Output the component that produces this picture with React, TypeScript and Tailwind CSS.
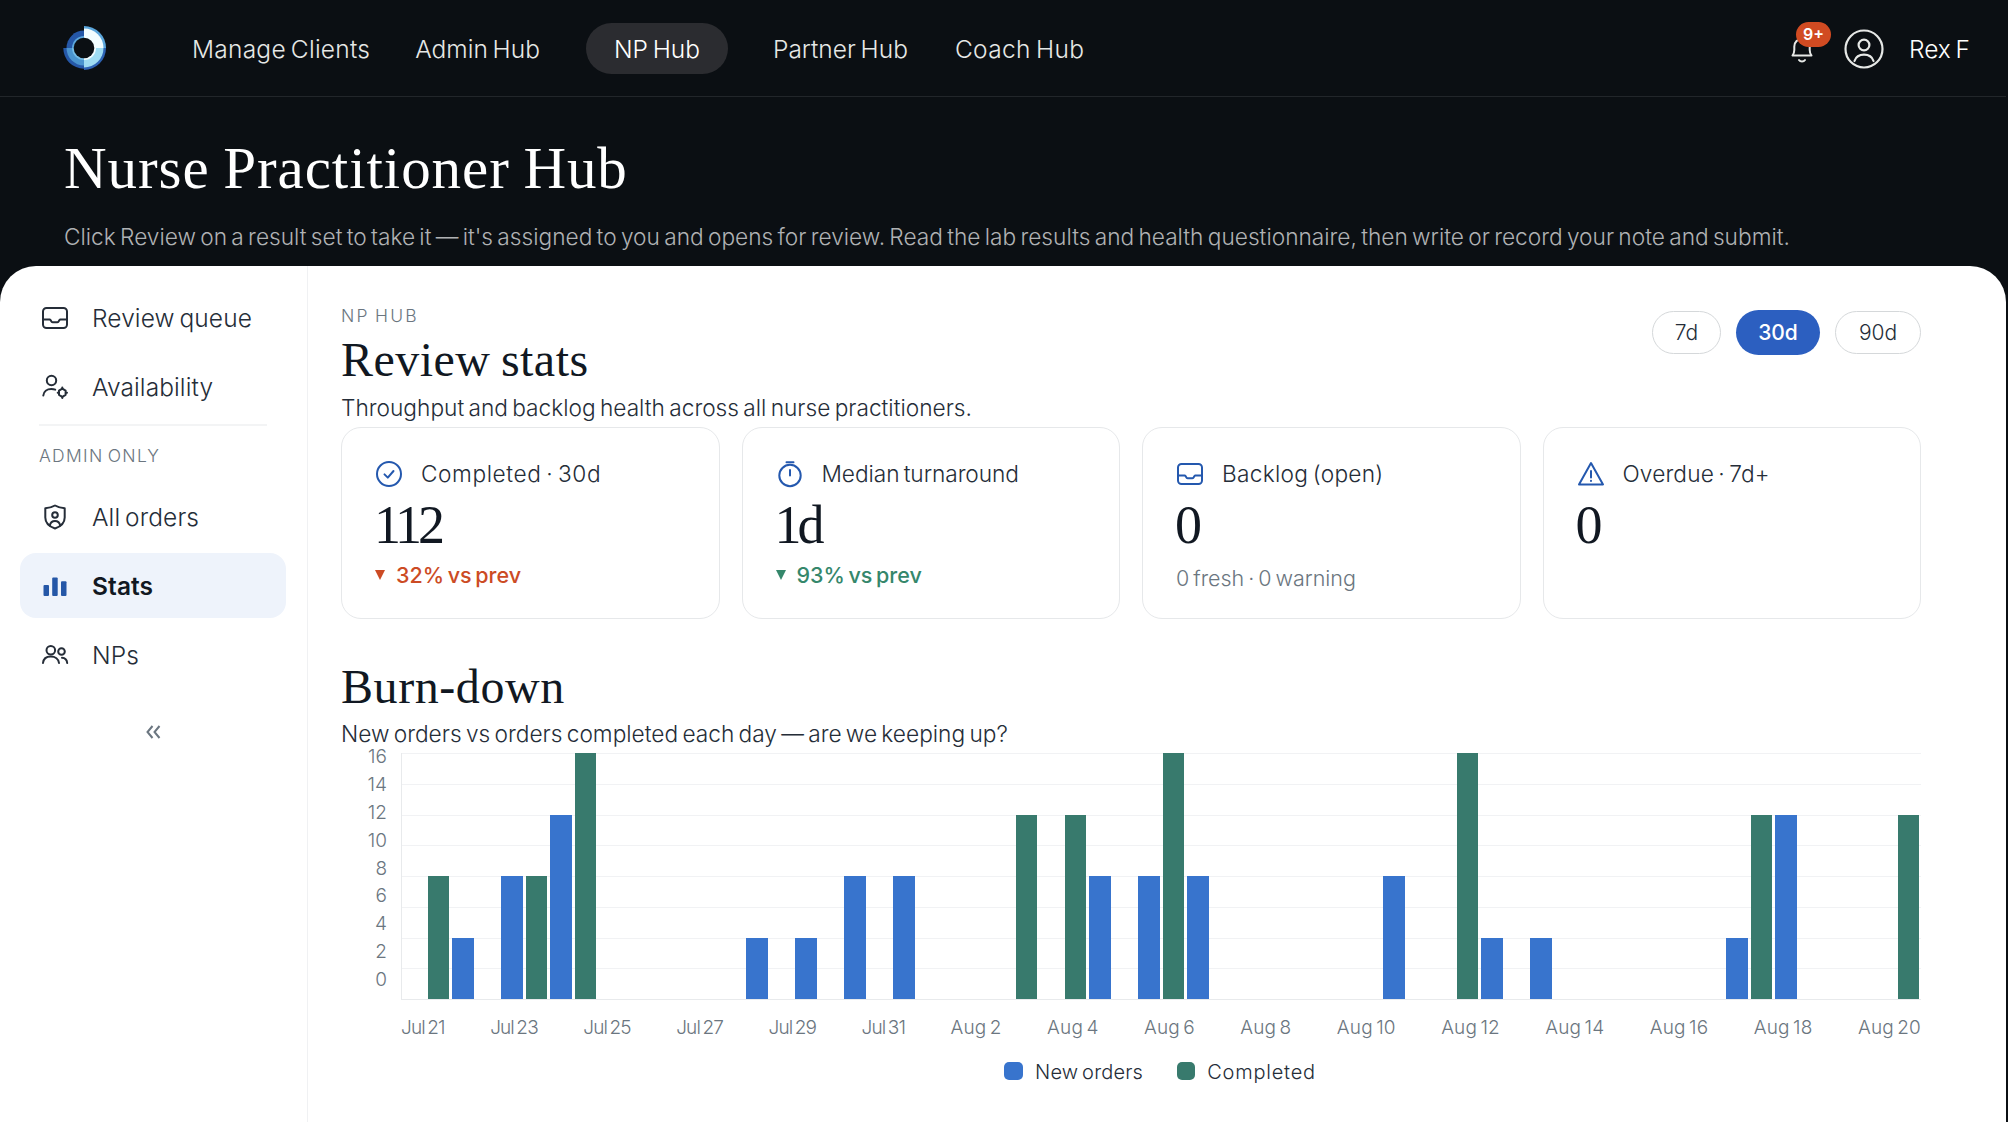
import React from "react";

interface IconProps {
  className?: string;
}

const navLinks = [
  { label: "Manage Clients", className: "ml-[86px] tracking-[0.01em]" },
  { label: "Admin Hub", className: "ml-[45px]" },
  { label: "NP Hub", active: true, className: "ml-[46px]" },
  { label: "Partner Hub", className: "ml-[45px]" },
  { label: "Coach Hub", className: "ml-[47px] tracking-[0.014em]" }
];

const yTicks = [16, 14, 12, 10, 8, 6, 4, 2, 0];

const xTicks = [
  "Jul 21", "Jul 23", "Jul 25", "Jul 27", "Jul 29", "Jul 31", "Aug 2", "Aug 4",
  "Aug 6", "Aug 8", "Aug 10", "Aug 12", "Aug 14", "Aug 16", "Aug 18", "Aug 20"
];

// [new orders, completed] for each day, Jul 21 to Aug 20
const days: [number, number][] = [
  [0, 8], [4, 0], [8, 8], [12, 16], [0, 0], [0, 0], [0, 0], [4, 0],
  [4, 0], [8, 0], [8, 0], [0, 0], [0, 12], [0, 12], [8, 0], [8, 16],
  [8, 0], [0, 0], [0, 0], [0, 0], [8, 0], [0, 16], [4, 0], [4, 0],
  [0, 0], [0, 0], [0, 0], [4, 12], [12, 0], [0, 0], [0, 12]
];

const MAX = 16;

function Svg({ className, children }: IconProps & { children: React.ReactNode }) {
  return (
    <svg viewBox="0 0 28 28" fill="none" stroke="currentColor" strokeWidth="2" strokeLinecap="round" strokeLinejoin="round" className={className}>
      {children}
    </svg>
  );
}

function InboxIcon({ className }: IconProps) {
  return (
    <Svg className={className}>
      <rect x="2" y="4" width="24" height="20" rx="3.5" />
      <path d="M2.5 15.5h6.5c.8 0 1 2.800 2.600 2.800h4.800c1.600 0 1.800-2.800 2.600-2.800h6.500" />
    </Svg>
  );
}

function UserCogIcon({ className }: IconProps) {
  return (
    <Svg className={className}>
      <circle cx="10.500" cy="7.500" r="4.700" />
      <path d="M2.300 22.500c.3-4 3.700-6.500 8-6.500 1.500 0 2.800.2 3.900.7" />
      <path d="M21.300 15.600l3.300 2v4.200l-3.300 2-3.300-2v-4.200z" />
      <path d="M21.300 14.400v1M21.300 24v1M16.700 19.700h.8M25.200 19.700h.8" />
    </Svg>
  );
}

function ShieldUserIcon({ className }: IconProps) {
  return (
    <Svg className={className}>
      <path d="M14 2.500c3 1.800 6.200 2.600 9.700 2.700v9.300c0 5.300-3.900 9-9.700 11-5.800-2-9.700-5.700-9.700-11V5.200C7.800 5.100 11 4.300 14 2.500z" />
      <circle cx="14" cy="12" r="2.800" />
      <path d="M8.800 22.500c.6-2.900 2.500-4.500 5.200-4.500s4.600 1.600 5.200 4.500" />
    </Svg>
  );
}

function BarsIcon({ className }: IconProps) {
  return (
    <svg viewBox="0 0 28 28" fill="currentColor" className={className}>
      <rect x="2.500" y="13" width="5.500" height="11" rx="1" />
      <rect x="11.200" y="5.500" width="5.500" height="18.500" rx="1" />
      <rect x="20" y="9.300" width="5.500" height="14.700" rx="1" />
    </svg>
  );
}

function UsersIcon({ className }: IconProps) {
  return (
    <Svg className={className}>
      <circle cx="9.800" cy="9.300" r="4.300" />
      <path d="M2 22c.4-4 3.500-6.500 7.800-6.500s7.800 2.500 8.200 6.500" />
      <circle cx="20.500" cy="10.500" r="3.300" />
      <path d="M21 16.800c2.900.1 4.900 2 5.200 5.200" />
    </Svg>
  );
}

function CheckCircleIcon({ className }: IconProps) {
  return (
    <Svg className={className}>
      <circle cx="14" cy="14" r="12" />
      <path d="M9.500 14.400l3.300 3.200 5.700-6.600" />
    </Svg>
  );
}

function StopwatchIcon({ className }: IconProps) {
  return (
    <Svg className={className}>
      <circle cx="14" cy="15.500" r="10.700" />
      <path d="M10.500 2.300h7M14 10v5.500" />
    </Svg>
  );
}

function WarningIcon({ className }: IconProps) {
  return (
    <Svg className={className}>
      <path d="M14 3L26 24.500H2z" />
      <path d="M14 11v6.500M14 20.700v.2" />
    </Svg>
  );
}

function Logo() {
  return (
    <svg viewBox="-22 -22 44 44" className="-mt-0.5 h-11 w-11">
      <path d="M0-17.500A17.500 17.500 0 0 0-17.500 0H0z" fill="#2557a7" />
      <path d="M0-12A12 12 0 0 0-12 0H0z" fill="#5ba6dc" />
      <path d="M0-22A22 22 0 0 1 22 0H0z" fill="#5ba6dc" />
      <path d="M0-19.500A19.500 19.500 0 0 1 19.500 0H0z" fill="#f2fdff" />
      <path d="M22 0A22 22 0 0 1 0 22V0z" fill="#2d62b4" />
      <path d="M19.500 0A19.500 19.500 0 0 1 0 19.500V0z" fill="#9edcf2" />
      <path d="M12 0A12 12 0 0 1 0 12V0z" fill="#f2fdff" />
      <path d="M-20.700 0A20.700 20.700 0 0 0 0 20.700V0z" fill="#2557a7" />
      <path d="M-17.500 0A17.500 17.500 0 0 0 0 17.500V0z" fill="#4a94cf" />
      <path d="M-12 0A12 12 0 0 0 0 12V0z" fill="#74bce6" />
      <circle r="10.300" fill="#0b0f13" />
    </svg>
  );
}

function TopBar() {
  return (
    <header className="flex h-[97px] items-center border-b border-[#22262a] pl-[62px] pt-px text-[24.500px] font-[330] text-[#e6e8e6]">
      <Logo />
      <nav className="flex items-center">
        {navLinks.map((link) => (
          <a
            key={link.label}
            className={`${link.className} whitespace-nowrap ${link.active ? "rounded-full bg-[#2b2c30] px-7 pb-[6px] pt-[8px] text-white" : "pt-0.5"}`}
          >
            {link.label}
          </a>
        ))}
      </nav>
      <div className="ml-auto flex items-center pr-[36px]">
        <div className="relative h-7 w-7">
          <Svg className="h-7 w-7">
            <path d="M4.500 20.500h19c-1.300-1.700-1.800-3-1.800-5.500v-3.500a7.700 7.700 0 0 0-15.400 0V15c0 2.500-.5 3.800-1.800 5.500z" />
            <path d="M11 25c.7 1 1.700 1.500 3 1.500s2.300-.5 3-1.500" />
          </Svg>
          <span className="absolute -top-[13px] left-2 flex h-[25px] w-[35px] items-center justify-center rounded-full bg-[#d14b22] text-[16px] font-semibold text-white">9+</span>
        </div>
        <svg viewBox="0 0 40 40" fill="none" stroke="currentColor" strokeWidth="2.200" strokeLinecap="round" className="ml-[28px] h-10 w-10">
          <circle cx="20" cy="20" r="18.500" />
          <circle cx="20" cy="16" r="5.400" />
          <path d="M10.500 32c1.300-4 4.900-6.300 9.500-6.300s8.200 2.300 9.500 6.300" />
        </svg>
        <span className="ml-[25px] pt-0.5 text-white">Rex F</span>
      </div>
    </header>
  );
}

interface SideItemProps {
  icon: React.ReactNode;
  label: string;
  active?: boolean;
}

function SideItem({ icon, label, active }: SideItemProps) {
  return (
    <a
      className={`flex h-[65px] items-center gap-[23px] rounded-2xl pl-[21px] text-[24.500px] ${
        active ? "bg-[#eef3fb] font-semibold text-[#111822]" : "font-[330] text-[#252d38]"
      }`}
    >
      {icon}
      <span className="pt-0.5 tracking-[0.004em]">{label}</span>
    </a>
  );
}

function Sidebar() {
  return (
    <aside className="w-[308px] shrink-0 border-r border-[#f0f1f3] pl-5 pr-[21px] pt-[19px]">
      <div className="flex flex-col gap-1">
        <SideItem icon={<InboxIcon className="h-7 w-7" />} label="Review queue" />
        <SideItem icon={<UserCogIcon className="h-7 w-7" />} label="Availability" />
      </div>
      <div className="mx-[19px] mt-[5px] h-0.5 bg-[#f3f4f5]" />
      <div className="ml-[19px] mt-[16px] h-[27px] text-[17.500px] leading-[27px] font-[330] tracking-[0.075em] text-[#6b7680]">ADMIN ONLY</div>
      <div className="mt-[15px] flex flex-col gap-1">
        <SideItem icon={<ShieldUserIcon className="h-7 w-7" />} label="All orders" />
        <SideItem icon={<BarsIcon className="h-7 w-7 text-[#2557a7]" />} label="Stats" active />
        <SideItem icon={<UsersIcon className="h-7 w-7" />} label="NPs" />
      </div>
      <div className="mt-[38px] flex justify-center">
        <svg viewBox="0 0 16 14" fill="none" stroke="#6b7680" strokeWidth="2" className="h-3.5 w-4">
          <path d="M7.500 1L2.500 7l5 6M14.500 1l-5 6 5 6" />
        </svg>
      </div>
    </aside>
  );
}

interface StatCardProps {
  icon: React.ReactNode;
  title: string;
  titleClass?: string;
  value: string;
  delta?: string;
  deltaClass?: string;
  note?: string;
}

function StatCard({ icon, title, titleClass, value, delta, deltaClass, note }: StatCardProps) {
  return (
    <div className="h-[192px] flex-1 rounded-[20px] border border-[#e6e8ea] pl-[33px] pt-[31px]">
      <div className="flex h-[29px] items-center gap-[18px] text-[22.700px] font-[330] text-[#252d38]">
        <span className="text-[#2458ae]">{icon}</span>
        <span className={`pt-px ${titleClass ?? ""}`}>{title}</span>
      </div>
      <div className="-ml-px mt-[10px] h-[54px] font-['Liberation_Serif',serif] text-[54px] leading-[54px] tracking-[-0.075em] text-[#111822]">{value}</div>
      {delta && (
        <div className={`mt-[9px] flex h-[28px] items-center gap-[11px] text-[21.500px] font-medium ${deltaClass}`}>
          <svg viewBox="0 0 10 10" fill="currentColor" className="h-2.5 w-2.5">
            <path d="M0 0h10L5 10z" />
          </svg>
          {delta}
        </div>
      )}
      {note && <div className="mt-[12px] h-[28px] text-[21.500px] leading-[28px] font-[330] text-[#6b7680]">{note}</div>}
    </div>
  );
}

function BurnDownChart() {
  return (
    <div>
      <div className="flex">
        <div className="flex h-[247px] w-[46px] flex-col justify-between pb-[17px] pt-px text-right text-[19px] leading-[6px] font-[330] text-[#6b7680]">
          {yTicks.map((t) => (
            <span key={t}>{t}</span>
          ))}
        </div>
        <div className="ml-[14px] grid flex-1 grid-cols-1 grid-rows-1 border-b border-l border-[#e8eaec]">
          <div className="col-start-1 row-start-1 flex h-[246px] flex-col">
            {yTicks.slice(1).map((t) => (
              <div key={t} className="flex-1 border-t border-[#f1f2f4]" />
            ))}
          </div>
          <div className="col-start-1 row-start-1 flex h-[246px]">
            {days.map(([created, done], i) => (
              <div key={i} className="flex flex-1 items-end gap-[3px] pl-px pr-[2px]">
                <div className="flex-[22] bg-[#3874cd]" style={{ height: `${(created / MAX) * 100}%` }} />
                <div className="flex-[21] bg-[#387a6d]" style={{ height: `${(done / MAX) * 100}%` }} />
              </div>
            ))}
          </div>
        </div>
      </div>
      <div className="ml-[60px] mt-[15px] flex h-[27px] items-center justify-between text-[19px] font-[330] text-[#6b7680]">
        {xTicks.map((t) => (
          <span key={t} className={t.startsWith("Jul") ? "tracking-[-0.045em]" : "tracking-[0.008em]"}>{t}</span>
        ))}
      </div>
      <div className="mt-[16px] ml-[60px] flex h-[26px] items-center justify-center pr-0.5 text-[20px] font-[330] text-[#252d38]">
        <span className="h-[18px] w-[19px] rounded-[5px] bg-[#3874cd]" />
        <span className="ml-[12px] pt-0.5 tracking-[0.01em]">New orders</span>
        <span className="ml-[34px] h-[18px] w-[18px] rounded-[5px] bg-[#387a6d]" />
        <span className="ml-[12px] pt-0.5 tracking-[0.04em]">Completed</span>
      </div>
    </div>
  );
}

export default function App() {
  return (
    <div className="h-[1122px] w-[2008px] overflow-hidden bg-[#0b0f13] pr-0.5 font-['Inter',sans-serif] [word-spacing:-2.1px]">
      <TopBar />
      <div className="h-[169px] pl-16 pt-[35px]">
        <h1 className="h-[72px] whitespace-nowrap font-['Liberation_Serif',serif] text-[59px] leading-[72px] tracking-[0.016em] text-white">Nurse Practitioner Hub</h1>
        <p className="mt-[19px] h-7 whitespace-nowrap text-[22.700px] leading-7 font-[310] text-[#b0b2b4]">
          Click Review on a result set to take it — it's assigned to you and opens for review. Read the lab results and health questionnaire, then write or record your note and submit.
        </p>
      </div>

      <div className="flex h-[856px] rounded-t-[36px] bg-white">
        <Sidebar />
        <main className="flex-1 pl-[33px] pr-[85px] pt-[35px]">
          <div className="flex justify-between">
            <div>
              <div className="h-[30px] text-[17.500px] leading-[30px] font-[330] tracking-[0.13em] text-[#6b7680]">NP HUB</div>
              <h2 className="h-[58px] font-['Liberation_Serif',serif] text-[48px] leading-[58px] tracking-[0.01em] text-[#111822]">Review stats</h2>
              <p className="mt-[5px] h-[33px] text-[22.700px] leading-[28px] font-[330] text-[#252d38]">Throughput and backlog health across all nurse practitioners.</p>
            </div>
            <div className="mt-[9px] flex h-[45px] items-center gap-[15px] text-[21px] text-[#252d38]">
              <button className="h-[43px] w-[69px] rounded-full border border-[#d5d8da] font-[350]">7d</button>
              <button className="h-[45px] w-[84px] rounded-full bg-[#2c5fc0] font-medium text-white">30d</button>
              <button className="h-[43px] w-[86px] rounded-full border border-[#d5d8da] font-[350]">90d</button>
            </div>
          </div>
          <div className="flex gap-[22px]">
            <StatCard icon={<CheckCircleIcon className="h-7 w-7" />} title="Completed · 30d" titleClass="tracking-[0.025em]" value="112" delta="32% vs prev" deltaClass="text-[#cc4b24]" />
            <StatCard icon={<StopwatchIcon className="h-7 w-7" />} title="Median turnaround" titleClass="tracking-[-0.003em]" value="1d" delta="93% vs prev" deltaClass="text-[#35876b]" />
            <StatCard icon={<InboxIcon className="h-7 w-7" />} title="Backlog (open)" titleClass="tracking-[0.012em]" value="0" note="0 fresh · 0 warning" />
            <StatCard icon={<WarningIcon className="h-7 w-7" />} title="Overdue · 7d+" titleClass="tracking-[0.006em]" value="0" />
          </div>
          <h2 className="mt-[39px] h-[58px] font-['Liberation_Serif',serif] text-[48px] leading-[58px] tracking-[0.012em] text-[#111822]">Burn-down</h2>
          <p className="mt-[4px] h-[33px] text-[22.700px] leading-[28px] font-[330] text-[#252d38]">New orders vs orders completed each day — are we keeping up?</p>
          <BurnDownChart />
        </main>
      </div>
    </div>
  );
}
